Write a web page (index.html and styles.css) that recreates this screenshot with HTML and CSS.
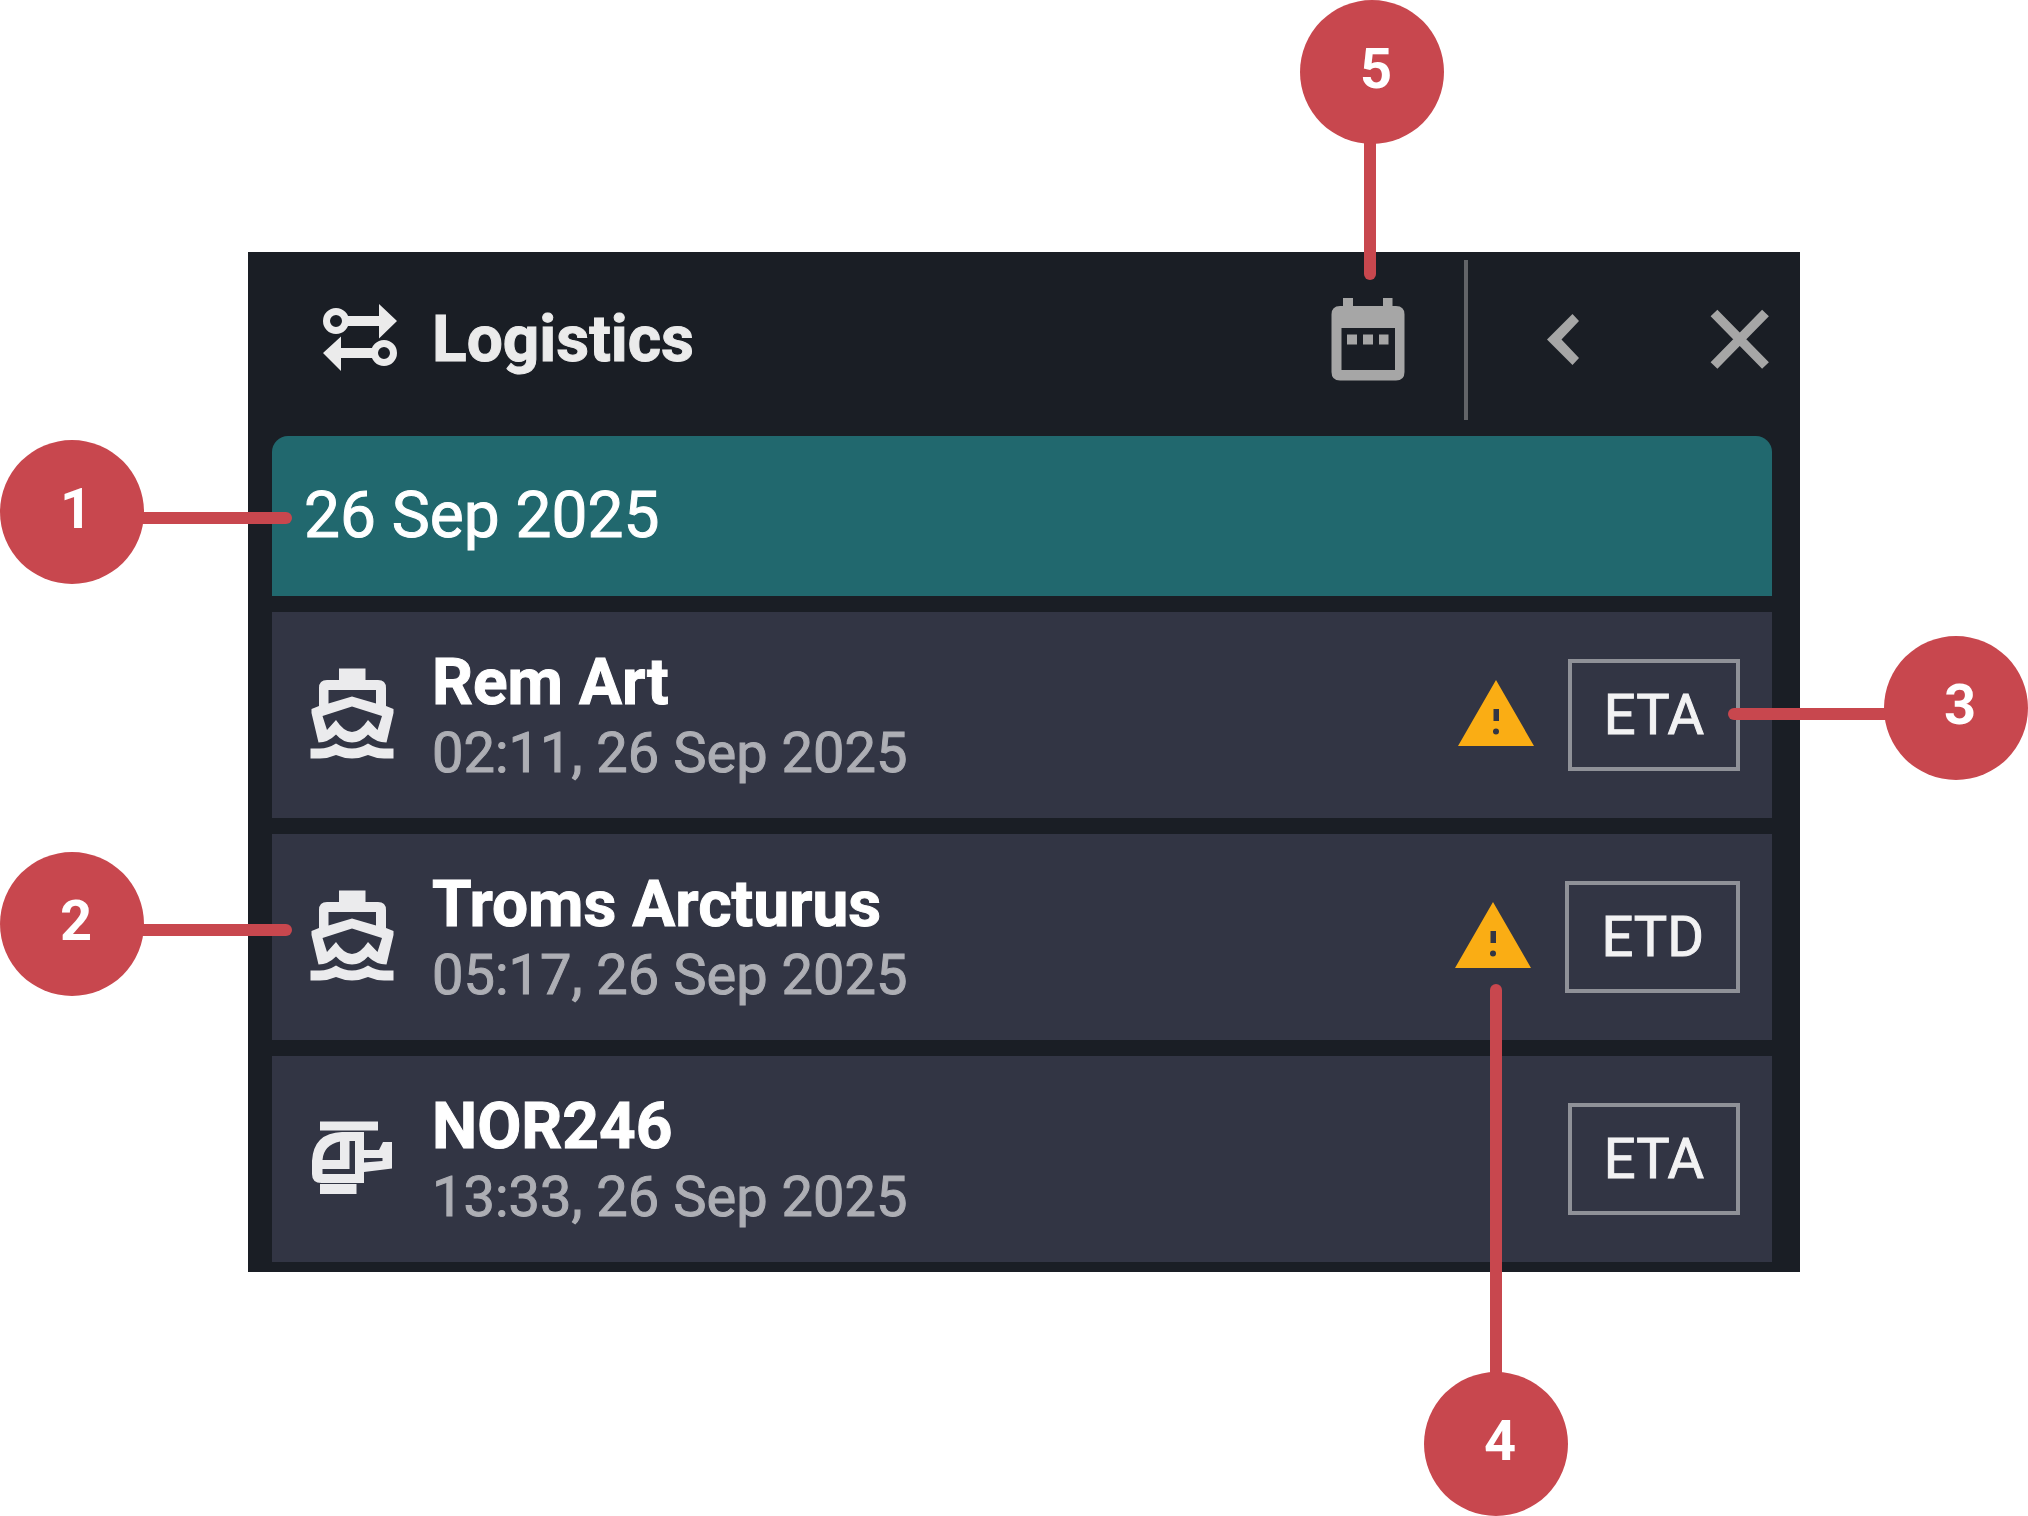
FILE: index.html
```
<!DOCTYPE html>
<html lang="en">
<head>
  <meta charset="UTF-8">
  <title>Logistics</title>
  <meta name="viewport" content="width=device-width, initial-scale=1.0">
  <link rel="stylesheet" href="styles.css">
</head>
<body>
  <!-- shared icons -->
  <svg class="sprite" aria-hidden="true">
    <symbol id="boat" viewBox="0 0 96 96">
      <path fill-rule="evenodd" d="M35 1.500h26.500V13H74q8 0 8 8v18l7.500 3v4l-7 29.500q-10.500 0-18.500-8-7 8-16 8t-16-8q-8 8-17.500 8L7.500 46v-4l7.500-3V21q0-8 8-8h12zM24.500 23v13.500L48 29.500l24 7V23zM18.500 49L23 63l9-10q8 12 16 12t16-12l9.500 10L78 49l-30-9.500z"/>
      <path d="M6.500 81.500H16q8 0 16-5 8 5 16 5t16-5q8 5 16 5h9.500v10H80q-8 0-16-3.500-8 3.500-16 3.500t-16-3.500q-8 3.500-16 3.500H6.500z"/>
    </symbol>
    <symbol id="helicopter" viewBox="0 0 96 96">
      <path d="M16 10.500h58v9H16zM16 73h36.500v10H16z"/>
      <path fill-rule="evenodd" d="M38 21h22v18h15l4-8h9v26.500L60 61v11H17.500q-9.500 0-9.500-9V50Q9.500 22 38 21zM36 30.500Q19.500 34 18.500 49H36zM45.500 30v28h-27v5H51V30zM60 47v4.500l18.500-1.500v-3z"/>
    </symbol>
    <symbol id="warning" viewBox="0 0 76 66">
      <path fill-rule="evenodd" d="M38 0l38 66H0zM35.500 29v12h5.500V29zM38 48.500a3 3 0 1 0 0 6 3 3 0 0 0 0-6z"/>
    </symbol>
  </svg>

  <main class="guide">
    <section class="panel">
      <header class="panel-header">
        <svg class="icon" viewBox="0 0 96 96" aria-hidden="true">
          <g fill="none" stroke="currentColor" stroke-width="7">
            <circle cx="24" cy="29" r="9.500"/>
            <circle cx="72" cy="61" r="9.500"/>
          </g>
          <path d="M33 24h34V12l18 17-18 17.500V34H33zM63 56H29V44.500L11 61l18 18V66h34z"/>
        </svg>
        <h1>Logistics</h1>
        <button class="icon-button" type="button" aria-label="Select date">
          <svg class="icon" viewBox="0 0 96 96">
            <path fill-rule="evenodd" d="M23 6h10v8h30V6h9.500v8H76q8.500 0 8.500 8.500V80q0 8.500-8.500 8.500H20q-8.500 0-8.500-8.500V22.500Q11.500 14 20 14h3zM21.500 36v42H75V36z"/>
            <path d="M27 42.500h10v10H27zM43 42.500h10v10H43zM59 42.500h9.500v10H59z"/>
          </svg>
        </button>
        <span class="divider"></span>
        <button class="icon-button" type="button" aria-label="Back">
          <svg class="icon" viewBox="0 0 96 96">
            <path d="M31 47.500L56.500 22l6.500 7-17.500 18.500L63 66l-6.500 7z"/>
          </svg>
        </button>
        <button class="icon-button close" type="button" aria-label="Close">
          <svg class="icon" viewBox="0 0 96 96">
            <path d="M24 21l51.500 52.500M75.500 21L24 73.500" stroke="currentColor" stroke-width="9.500"/>
          </svg>
        </button>
      </header>

      <h2 class="date">26 Sep 2025</h2>

      <ul class="list">
        <li class="item">
          <svg class="icon"><use href="#boat"/></svg>
          <div class="item-text">
            <h3>Rem Art</h3>
            <p>02:11, 26 Sep 2025</p>
          </div>
          <svg class="warning" role="img" aria-label="Warning"><use href="#warning"/></svg>
          <span class="badge">ETA</span>
        </li>
        <li class="item">
          <svg class="icon"><use href="#boat"/></svg>
          <div class="item-text">
            <h3>Troms Arcturus</h3>
            <p>05:17, 26 Sep 2025</p>
          </div>
          <svg class="warning" role="img" aria-label="Warning"><use href="#warning"/></svg>
          <span class="badge">ETD</span>
        </li>
        <li class="item">
          <svg class="icon"><use href="#helicopter"/></svg>
          <div class="item-text">
            <h3>NOR246</h3>
            <p>13:33, 26 Sep 2025</p>
          </div>
          <span class="badge">ETA</span>
        </li>
      </ul>
    </section>

    <!-- numbered callouts -->
    <div class="callout callout-1">1</div>
    <div class="callout callout-2">2</div>
    <div class="callout callout-3">3</div>
    <div class="callout callout-4">4</div>
    <div class="callout callout-5">5</div>
  </main>
</body>
</html>
```
FILE: styles.css
```
* {
  box-sizing: border-box;
}

body {
  margin: 0;
  background-color: #ffffff;
  font-family: Roboto, "Liberation Sans", sans-serif;
}

h1, h2, h3, p, ul {
  margin: 0;
  padding: 0;
}

.sprite {
  position: absolute;
  width: 0;
  height: 0;
}

.guide {
  position: relative;
  padding: 252px 228px 244px 248px;
}

.panel {
  background-color: #1a1e25;
  padding: 0 28px 10px 24px;
  -webkit-text-stroke: 1px currentColor;
}

.icon {
  display: block;
  flex: none;
  width: 96px;
  height: 96px;
  fill: currentColor;
}

/* header */
.panel-header {
  display: flex;
  align-items: center;
  height: 176px;
  margin: 0 -14px 8px 0;
  padding-left: 40px;
  color: #ebebeb;
}

.panel-header h1 {
  flex: 1;
  margin-left: 24px;
  font-size: 64px;
  line-height: 72px;
  font-weight: 700;
}

.icon-button {
  padding: 0;
  border: none;
  background: none;
  color: #a6a6a6;
  cursor: pointer;
}

.close {
  margin-left: 78px;
}

.divider {
  width: 4px;
  height: 160px;
  margin: 0 48px;
  background-color: #626468;
}

.date {
  padding: 40px 32px;
  border-radius: 16px 16px 0 0;
  background-color: #21686e;
  color: #ffffff;
  font-size: 64px;
  line-height: 80px;
  font-weight: 400;
}

/* rows */
.list {
  list-style: none;
}

.item {
  display: flex;
  align-items: center;
  height: 206px;
  margin-top: 16px;
  padding: 0 32px;
  background-color: #323544;
  color: #ebebed;
}

.item-text {
  flex: 1;
  margin-left: 32px;
  padding-top: 6px;
}

.item-text h3 {
  color: #ffffff;
  font-size: 64px;
  line-height: 70px;
  font-weight: 700;
}

.item-text p {
  color: #adaeb4;
  font-size: 56px;
  line-height: 70px;
}

.warning {
  flex: none;
  width: 76px;
  height: 66px;
  margin: 0 34px 4px 0;
  fill: #faad14;
}

.badge {
  padding: 0 32px;
  border: 4px solid #8f9198;
  color: #f2f2f3;
  font-size: 56px;
  line-height: 104px;
}

/* callouts */
.callout {
  position: absolute;
  width: 144px;
  height: 144px;
  padding-left: 8px;
  border-radius: 50%;
  background-color: #c8474e;
  color: #ffffff;
  font-size: 56px;
  font-weight: 700;
  line-height: 138px;
  text-align: center;
}

.callout::after {
  content: "";
  position: absolute;
  background-color: #c8474e;
}

.callout-1, .callout-2 {
  left: 0;
}

.callout-1 {
  top: 440px;
}

.callout-2 {
  top: 852px;
}

.callout-1::after, .callout-2::after {
  top: 72px;
  left: 136px;
  width: 156px;
  height: 12px;
  border-radius: 0 6px 6px 0;
}

.callout-3 {
  top: 636px;
  right: 0;
}

.callout-3::after {
  top: 72px;
  right: 136px;
  width: 164px;
  height: 12px;
  border-radius: 6px 0 0 6px;
}

.callout-4 {
  right: 460px;
  bottom: 0;
}

.callout-4::after {
  bottom: 136px;
  left: 66px;
  width: 12px;
  height: 396px;
  border-radius: 6px 6px 0 0;
}

.callout-5 {
  top: 0;
  right: 584px;
}

.callout-5::after {
  top: 136px;
  left: 64px;
  width: 12px;
  height: 144px;
  border-radius: 0 0 6px 6px;
}
```
